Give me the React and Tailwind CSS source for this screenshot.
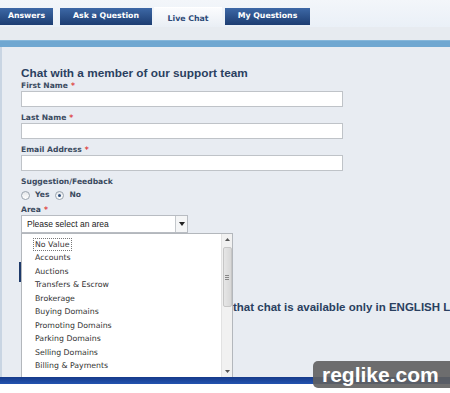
import React from 'react';

const tabs = [
  { label: 'Answers', w: 'w-[53px]', ml: 'ml-0' },
  { label: 'Ask a Question', w: 'w-[92px]', ml: 'ml-[7px]' },
  { label: 'Live Chat', w: 'w-[68px]', ml: 'ml-[2px]', active: true },
  { label: 'My Questions', w: 'w-[85px]', ml: 'ml-[3px]' },
];

const areas = [
  'No Value',
  'Accounts',
  'Auctions',
  'Transfers & Escrow',
  'Brokerage',
  'Buying Domains',
  'Promoting Domains',
  'Parking Domains',
  'Selling Domains',
  'Billing & Payments',
];

function Label({ children, required }) {
  return (
    <div className="h-[10px] leading-[10px] text-[7.6px] font-bold text-[#3a4a60] font-['DejaVu_Sans',sans-serif] whitespace-nowrap">
      {children}
      {required && <span className="text-[#d33] ml-[3px]">*</span>}
    </div>
  );
}

function Field({ label }) {
  return (
    <div className="flex flex-col">
      <Label required>{label}</Label>
      <div className="w-[322px] h-[16px] bg-white border border-[#bfc3c8]" />
    </div>
  );
}

function Radio({ checked }) {
  return (
    <span className="relative w-[9px] h-[9px] rounded-full border border-[#9aa4ae] bg-gradient-to-b from-[#e4e7ea] to-white flex items-center justify-center">
      {checked && <span className="w-[3px] h-[3px] rounded-full bg-[#2b4b7a]" />}
    </span>
  );
}

export default function App() {
  return (
    <div className="relative w-[450px] h-[393px] overflow-hidden bg-white font-['DejaVu_Sans',sans-serif]">
      {/* tabs */}
      <div className="h-[27px] flex items-end bg-gradient-to-b from-[#f3f6fa] to-[#eaf0f7]">
        {tabs.map((t) =>
          t.active ? (
            <div
              key={t.label}
              className={`${t.w} ${t.ml} h-[20px] flex items-center justify-center bg-gradient-to-b from-[#fbfcfe] to-[#e9eef4] border-t border-white text-[7.8px] font-bold text-[#2d4a78] pt-[2px]`}
            >
              {t.label}
            </div>
          ) : (
            <div
              key={t.label}
              className={`${t.w} ${t.ml} h-[17px] mb-[2px] flex items-center justify-center bg-gradient-to-b from-[#3d68a6] to-[#1d3d72] text-[7.8px] font-bold text-white pb-[2px]`}
            >
              {t.label}
            </div>
          )
        )}
      </div>
      <div className="h-[13px] bg-[#e7ebf0]" />
      <div className="h-[7px] bg-[#6fa7d1] border-t border-[#85b6da]" />

      {/* content */}
      <div className="relative h-[330px] bg-[#e8ecf2] border-l-2 border-[#c9d5e3] pl-[19px] overflow-hidden">
        <h1 className="mt-[19px] h-[14px] leading-[14px] text-[11.8px] font-bold text-[#2a3f60] font-['Liberation_Sans',sans-serif] whitespace-nowrap">
          Chat with a member of our support team
        </h1>
        <div className="flex flex-col gap-[6px] mt-[1px]">
          <Field label="First Name" />
          <Field label="Last Name" />
          <Field label="Email Address" />
          <div className="flex flex-col">
            <Label>Suggestion/Feedback</Label>
            <div className="mt-[3px] h-[10px] flex items-center text-[7.6px] font-bold text-[#3a4a60]">
              <Radio />
              <span className="ml-[5px]">Yes</span>
              <span className="ml-[6px]"><Radio checked /></span>
              <span className="ml-[5px]">No</span>
            </div>
          </div>
        </div>
        <div className="mt-[5px]">
          <Label required>Area</Label>
          <div className="w-[167px] h-[18px] bg-white border border-[#b8bcc2] flex items-center">
            <span className="flex-1 pl-[5px] text-[8.5px] text-[#222] font-['Liberation_Sans',sans-serif]">Please select an area</span>
            <span className="w-[12px] h-full border-l border-[#c4c8cc] bg-[#f4f5f6] flex items-center justify-center">
              <svg width="6" height="4" viewBox="0 0 6 4"><path d="M0 0h6L3 4z" fill="#222" /></svg>
            </span>
          </div>
        </div>
        {/* start-chat button, hidden under the open list */}
        <div className="mt-[29px] -ml-[2px] w-[100px] h-[20px] bg-[#1e3a6a]" />
        <div className="mt-[18px] pl-[212px] h-[14px] leading-[14px] text-[11.5px] font-bold text-[#2a3f60] font-['Liberation_Sans',sans-serif] whitespace-nowrap">
          that chat is available only in ENGLISH LANGUAGE
        </div>

        {/* open dropdown */}
        <div className="absolute left-[19px] top-[186px] w-[212px] h-[144px] bg-white border border-[#b3b7bc] border-b-0 flex">
          <ul className="flex-1 pt-[4px] pl-[11px] text-[7.8px] text-[#333] leading-[13.44px]">
            {areas.map((a, i) => (
              <li key={a} className="h-[13.44px] whitespace-nowrap">
                <span className={i === 0 ? 'px-[1px] py-[1px] border border-dotted border-[#777]' : 'px-[2px]'}>{a}</span>
              </li>
            ))}
          </ul>
          <div className="w-[11px] h-full bg-[#f1f1f1] border-l border-[#e2e2e2] flex flex-col items-center">
            <div className="h-[11px] flex items-center justify-center">
              <svg width="5" height="3" viewBox="0 0 5 3"><path d="M2.5 0L5 3H0z" fill="#555" /></svg>
            </div>
            <div className="mt-[2px] w-[9px] h-[60px] rounded-[2px] border border-[#c6c6c6] bg-gradient-to-r from-[#e6e6e6] to-[#d8d8d8] flex flex-col items-center justify-center gap-[1px]">
              <span className="w-[4px] h-px bg-[#888]" />
              <span className="w-[4px] h-px bg-[#888]" />
              <span className="w-[4px] h-px bg-[#888]" />
            </div>
            <div className="flex-1" />
            <div className="h-[11px] flex items-center justify-center">
              <svg width="5" height="3" viewBox="0 0 5 3"><path d="M0 0h5L2.5 3z" fill="#555" /></svg>
            </div>
          </div>
        </div>
      </div>
      <div className="h-[7px] bg-gradient-to-b from-[#163a8a] to-[#2453b0]" />

      {/* watermark */}
      <div className="absolute left-[313px] top-[361px] w-[150px] h-[27px] rounded-[5px] bg-[#5f5f5f]/90 flex items-center pl-[9px]">
        <span className="text-[21px] leading-none font-bold text-white font-['Liberation_Sans',sans-serif] -mt-[1px]">reglike.com</span>
      </div>
    </div>
  );
}
